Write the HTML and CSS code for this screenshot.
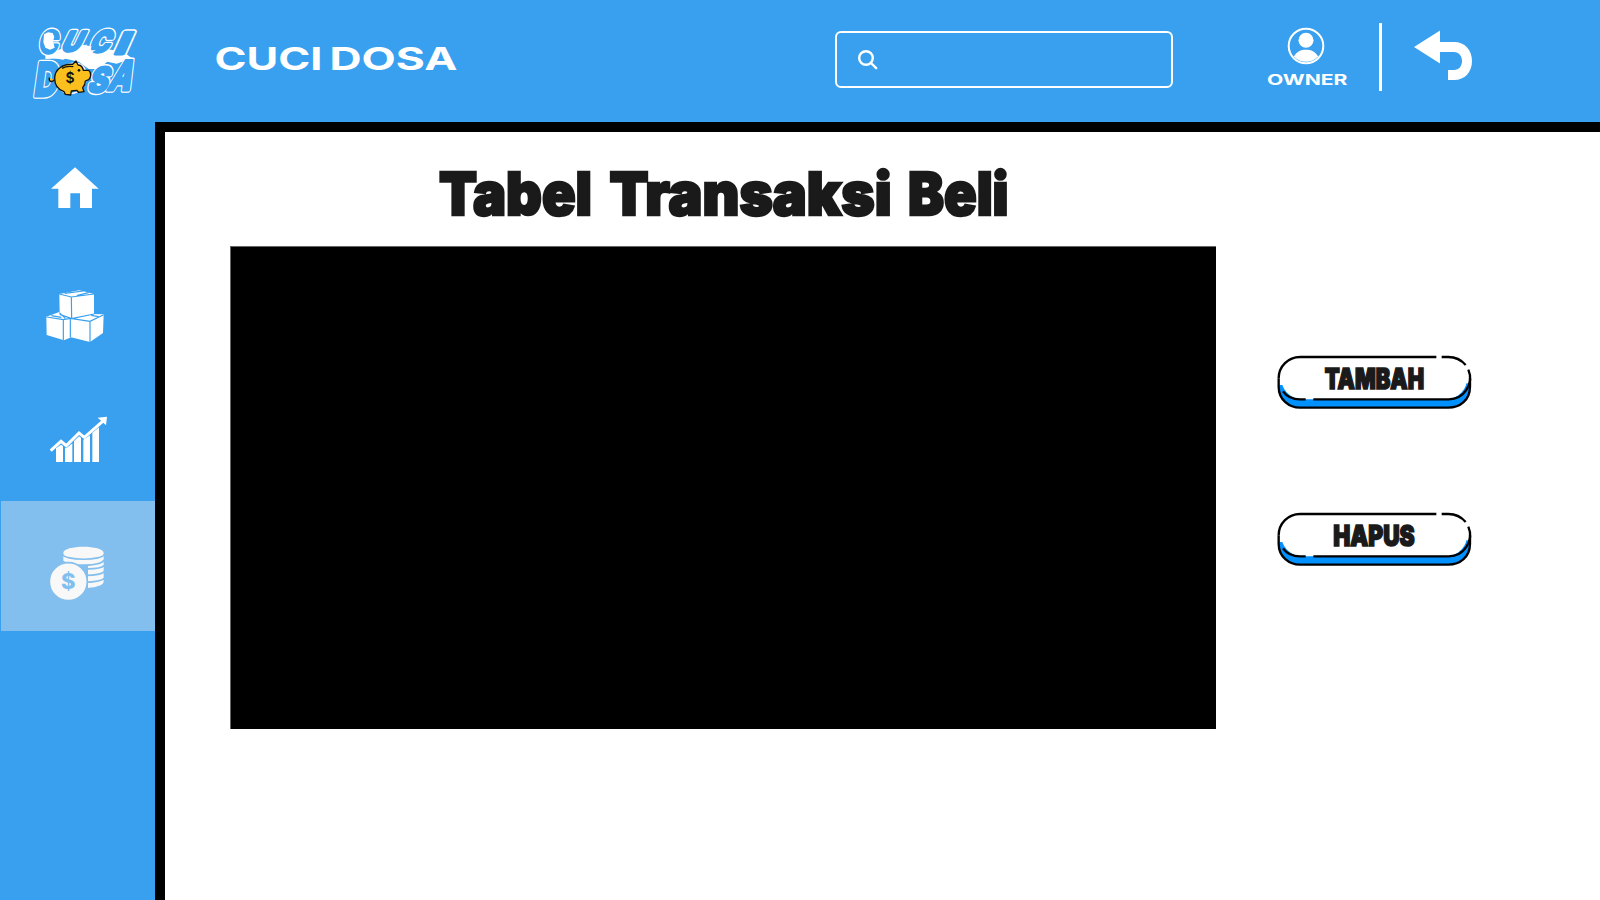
FILE: index.html
```html
<!DOCTYPE html>
<html lang="id">
<head>
<meta charset="utf-8">
<title>Cuci Dosa</title>
<link rel="stylesheet" href="styles.css">
</head>
<body>
<div class="app">
  <header class="header">
    <svg class="logo" viewBox="0 0 390 285">
      <path class="white" d="M76 118L130 100L190 90L250 100L312 112L336 130L290 146L262 140L236 162L206 162L176 140L130 130L76 132Z"/>
      <g id="letters" class="bubble">
        <text transform="translate(56 114) skewX(-8)" font-size="92" textLength="56" lengthAdjust="spacingAndGlyphs">C</text>
        <text transform="translate(120 108) skewX(-26)" font-size="80" textLength="56" lengthAdjust="spacingAndGlyphs">U</text>
        <text transform="translate(204 110) skewX(-22)" font-size="88" textLength="60" lengthAdjust="spacingAndGlyphs">C</text>
        <text transform="translate(280 116) skewX(-24)" font-size="90" textLength="36" lengthAdjust="spacingAndGlyphs">I</text>
        <text transform="translate(40 242) skewX(-8)" font-size="138" textLength="72" lengthAdjust="spacingAndGlyphs">D</text>
        <text transform="translate(112 228) skewX(-8)" font-size="104" textLength="78" lengthAdjust="spacingAndGlyphs">O</text>
        <text transform="translate(200 232) skewX(-18)" font-size="102" textLength="58" lengthAdjust="spacingAndGlyphs">S</text>
        <text transform="translate(260 226) skewX(-20)" font-size="122" textLength="68" lengthAdjust="spacingAndGlyphs">A</text>
      </g>
      <use class="inner" href="#letters"/>
      <path class="white" d="M72 58L84 52L98 54L103 66L99 78L104 98L90 104L76 98L70 82Z"/>
      <path class="white" d="M80 126l22-10 10 8 16-8 20 8-18 10zM190 108l8-22 4 14 14-6-8 12 20 0-18 8z"/>
      <g class="pig">
        <path d="M103 195C94 203 86 200 88 188"/>
        <path d="M104 190C104 164 128 146 158 148L168 138L174 150C184 150 188 156 190 166L206 166C214 172 214 188 206 194L196 198C196 208 192 214 188 218L192 230L176 232L170 226L154 228L152 240L136 238L132 230C114 224 104 208 104 190Z"/>
        <path d="M126 160Q140 152 160 155"/>
        <circle class="eye" cx="177" cy="166" r="4"/>
      </g>
      <text class="coin-mark" x="150" y="204" font-size="42">$</text>
    </svg>
    <svg class="brand" viewBox="0 0 260 40">
      <text x="-1.5" y="28" font-size="31.6" textLength="108" lengthAdjust="spacingAndGlyphs">CUCI</text>
      <text x="113.5" y="28" font-size="31.6" textLength="128" lengthAdjust="spacingAndGlyphs">DOSA</text>
    </svg>
    <label class="search">
      <svg viewBox="0 0 20 20"><circle cx="8" cy="8" r="6.8"/><path d="M13 13l5.2 5.2"/></svg>
    </label>
    <div class="user">
      <svg class="avatar" viewBox="0 0 38 38">
        <circle class="ring" cx="19" cy="19" r="17.3"/>
        <circle class="white" cx="19" cy="13.2" r="7.5"/>
        <path class="white" d="M6.8 29.6C9.5 24.5 14 22.7 19 22.7S28.5 24.5 31.2 29.6A17 17 0 0 1 6.8 29.6Z"/>
      </svg>
      <svg class="role" viewBox="0 0 84 16"><text x="1" y="13" font-size="14.4" textLength="80.5" lengthAdjust="spacingAndGlyphs">OWNER</text></svg>
    </div>
    <div class="divider"></div>
    <svg class="back" viewBox="0 0 60 50"><path class="white" d="M0 17L26 .5V12H40C51 12 58 20 58 31C58 42 51 50 40 50H34V40H40C45 40 48 36 48 31C48 26 45 22 40 22H26V33.5Z"/></svg>
  </header>

  <nav class="sidebar">
    <a class="item home"><svg viewBox="0 0 270 225"><path class="white" d="M135 52L206 116H186V174H150V130H121V174H85V116H63Z"/></svg></a>
    <a class="item boxes"><svg viewBox="0 0 270 225">
      <path class="white" d="M49 110L88 96L123 115L178 102L221 103L219 159L180 186L123 172L102 181L50 165Z"/>
      <path class="white" d="M88 42L148 31L192 42V102L125 116L89 102Z"/>
      <path class="seam" d="M88 42L124 51L192 42M124 51L125 115M104 40L160 33M140 47L176 38M89 103L125 116L192 102M50 111L100 119L121 115M100 119V180M121 115V172M121 115L180 124L221 104M180 124V186M64 107L94 112M88 98L106 115M184 106L206 110"/>
    </svg></a>
    <a class="item chart"><svg viewBox="0 0 270 225">
      <path class="white" d="M78 145L93 134L99 138V186H78ZM105 143L110 144L127 130V186H105ZM132 123L147 109L153 113V186H132ZM160 119L180 106V186H160ZM187 98L207 82V186H187Z"/>
      <path class="trend" d="M62 152L93 124L109 137L147 99L163 112L218 64"/>
      <path class="white" d="M203 53L231 50L228 76Z"/>
    </svg></a>
    <a class="item money active"><svg viewBox="0 0 180 180">
      <path class="coin" d="M40 21C40 -4 161 -4 161 21V106C161 118 140 124 114 126V60H40Z"/>
      <path class="gap" d="M38 24C40 45 161 45 163 24M38 46C60 62 150 62 163 42M95 68C130 70 155 66 163 58M105 88C130 88 155 86 163 77M105 109C130 108 155 105 163 97"/>
      <circle class="coin rim" cx="55" cy="107" r="57"/>
      <text class="dollar" x="55" y="130" font-size="66">$</text>
    </svg></a>
  </nav>

  <main class="content">
    <section class="panel">
      <svg class="title" viewBox="0 0 600 80">
        <text x="10" y="51" textLength="153" lengthAdjust="spacingAndGlyphs">Tabel</text>
        <text x="180.5" y="51" textLength="282" lengthAdjust="spacingAndGlyphs">Transaksi</text>
        <text x="479" y="51" textLength="100.5" lengthAdjust="spacingAndGlyphs">Beli</text>
      </svg>
      <div class="table"></div>
    </section>
    <aside class="actions">
      <svg class="button" viewBox="0 0 660 225">
        <path class="base" d="M43 120V125C43 165 73 188 105 188H550C585 188 615 165 615 125V115Z"/>
        <path class="face" d="M105 36H550A64 64 0 0 1 550 163H105A64 64 0 0 1 105 36Z"/>
        <path class="line" d="M41 100V125C41 165 73 188 105 188H550C585 188 615 165 615 125V100"/>
        <path class="line" d="M514 36H105C70 36 41 64 41 100M530 36H550C573 36 590 46 602 60M610 74A64 64 0 0 1 550 163H145M122 163H105C83 163 64 153 54 139"/>
        <text x="179" y="132" textLength="298" lengthAdjust="spacingAndGlyphs">TAMBAH</text>
      </svg>
      <svg class="button" viewBox="0 0 660 225">
        <path class="base" d="M43 120V125C43 165 73 188 105 188H550C585 188 615 165 615 125V115Z"/>
        <path class="face" d="M105 36H550A64 64 0 0 1 550 163H105A64 64 0 0 1 105 36Z"/>
        <path class="line" d="M41 100V125C41 165 73 188 105 188H550C585 188 615 165 615 125V100"/>
        <path class="line" d="M514 36H105C70 36 41 64 41 100M530 36H550C573 36 590 46 602 60M610 74A64 64 0 0 1 550 163H145M122 163H105C83 163 64 153 54 139"/>
        <text x="205" y="133" textLength="244" lengthAdjust="spacingAndGlyphs">HAPUS</text>
      </svg>
    </aside>
  </main>
</div>
</body>
</html>
```

FILE: styles.css
```css
* { box-sizing: border-box; }
body { margin: 0; font-family: Inter, "Liberation Sans", sans-serif; }
svg { display: block; flex: none; overflow: visible; }
.white { fill: #fff; }
.app {
  display: grid;
  grid-template: 122px 778px / 155px 1445px;
  width: 1600px;
  height: 900px;
  overflow: hidden;
  background: #38a0ee;
}
.header { grid-column: 1 / 3; display: flex; align-items: flex-start; }
.logo { width: 130px; height: 95px; margin: 15px 0 0 20px; stroke: #fff; stroke-width: 17; }
.logo .white { stroke: none; }
.bubble text {
  fill: #38a0ee;
  stroke-linejoin: round;
  font-weight: 800;
}
.logo .inner { stroke: #38a0ee; stroke-width: 9; }
.logo .pig { fill: #fcc01e; stroke: #111; stroke-width: 4; stroke-linejoin: round; }
.pig .eye { fill: #111; stroke: none; }
.coin-mark { fill: #111; stroke: none; font-weight: 600; text-anchor: middle; }
.brand { width: 260px; height: 40px; margin: 42px 0 0 66px; fill: #fff; font-weight: 700; }
.search {
  width: 338px;
  height: 57px;
  margin: 31px 0 0 358.5px;
  padding: 17px 0 0 21.5px;
  border: 2px solid #fff;
  border-radius: 6px;
}
.search svg { width: 20px; height: 20px; fill: none; stroke: #fff; stroke-width: 2.4; stroke-linecap: round; }
.user { width: 84px; margin: 27px 0 0 93.5px; display: flex; flex-direction: column; align-items: center; }
.avatar { width: 38px; height: 38px; margin-left: -4px; }
.ring { fill: none; stroke: #fff; stroke-width: 2; }
.role { width: 84px; height: 16px; margin-top: 7px; fill: #fff; font-weight: 700; }
.divider { width: 3px; height: 68px; margin: 23px 0 0 29px; background: #fff; }
.back { width: 60px; height: 50px; margin: 30px 0 0 32px; }

.sidebar { display: flex; flex-direction: column; align-items: flex-start; }
.item { display: block; padding-left: 30px; }
.item svg { width: 90px; height: 75px; }
.home { padding-top: 28px; }
.boxes { padding-top: 55px; }
.chart { padding-top: 45px; }
.seam { fill: none; stroke: #38a0ee; stroke-width: 3.5; }
.trend { fill: none; stroke: #fff; stroke-width: 9; }
.active {
  z-index: 1;
  width: 154px;
  height: 130px;
  margin: 26px 0 0 1px;
  padding: 45px 0 0 49px;
  background: #82bfee;
}
.item.active svg { width: 60px; height: 60px; }
.coin { fill: #f8f8f8; }
.gap { fill: none; stroke: #82bfee; stroke-width: 5; }
.rim { stroke: #82bfee; stroke-width: 5; }
.dollar { fill: #82bfee; font-weight: 800; text-anchor: middle; }

.content {
  display: flex;
  align-items: flex-start;
  border: solid #000;
  border-width: 10px 0 0 10px;
  background: #fff;
}
.panel { width: 986px; margin-left: 65px; }
.title {
  width: 600px;
  height: 80px;
  margin: 32px 0 0 199px;
  fill: #1a1a1a;
  stroke: #1a1a1a;
  stroke-width: 2.5;
  font-size: 59px;
  font-weight: 900;
}
.table { height: 483px; margin-top: 2px; background: #000; border: solid #666; border-width: 1px 0 0 1px; }
.actions { display: flex; flex-direction: column; gap: 82px; margin: 213px 0 0 49px; }
.button { width: 220px; height: 75px; }
.base { fill: #0091ff; }
.face { fill: #fff; }
.line { fill: none; stroke: #000; stroke-width: 7; }
.button text { fill: #1a1a1a; stroke: #1a1a1a; stroke-width: 5; font-size: 84px; font-weight: 900; }
```
